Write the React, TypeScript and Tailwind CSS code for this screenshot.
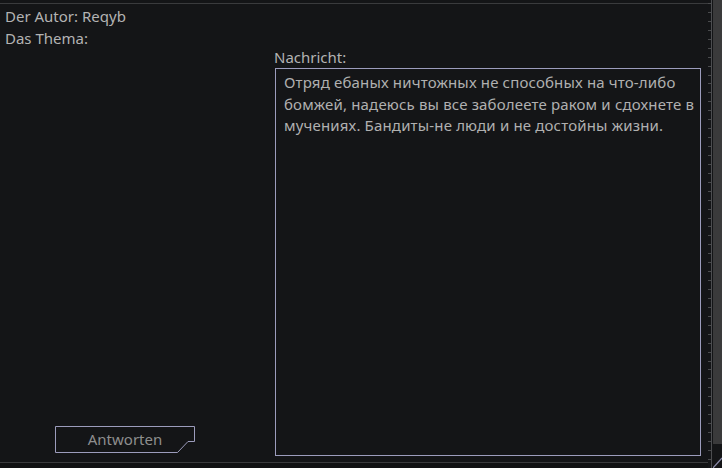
const ticks = Array.from({ length: 52 });

const CutButton = ({ label }: { label: string }) => (
    <button className="relative w-[140px] h-[27px] flex items-center justify-center text-[15px] text-[#8e8e8e]">
        <svg
            className="absolute inset-0"
            width="140"
            height="27"
            viewBox="0 0 140 27"
        >
            <path
                d="M0.5 0.5 H139.5 V15.5 H133 L122.5 26.5 H0.5 Z"
                fill="none"
                stroke="#9c9cbc"
                strokeWidth="1"
            />
        </svg>
        <span className="relative">{label}</span>
    </button>
);

export default function App() {
    return (
        <div
            className="w-[722px] h-[468px] bg-[#141517] flex overflow-hidden text-[#b3b3b3]"
            style={{ fontFamily: '"Noto Sans", "Liberation Sans", sans-serif' }}
        >
            <div className="w-[708px] flex flex-col pt-[3px]">
                <div className="flex-1 border-t border-b border-[#3a3b3d] flex">
                    {/* left column */}
                    <div className="w-[274px] flex flex-col pl-[5px] pt-[2px] pb-[9px]">
                        <p className="text-[15px] leading-[21px]">Der Autor: Reqyb</p>
                        <p className="text-[15px] leading-[21px] mt-[1px]">Das Thema:</p>
                        <div className="mt-auto pl-[50px]">
                            <CutButton label="Antworten" />
                        </div>
                    </div>
                    {/* right column */}
                    <div className="flex-1 flex flex-col pt-[43px] pb-[6px]">
                        <p className="text-[15px] leading-[20px] mb-[1px]">Nachricht:</p>
                        <div className="ml-[1px] w-[426px] flex-1 border border-[#9c9cbc] pl-[8px] pt-[3px] overflow-hidden">
                            <p className="text-[15px] leading-[21.5px] tracking-[0.16px] text-[#b0b0b0] whitespace-nowrap">
                                Отряд ебаных ничтожных не способных на что-либо
                                <br />
                                бомжей, надеюсь вы все заболеете раком и сдохнете в
                                <br />
                                мучениях. Бандиты-не люди и не достойны жизни.
                            </p>
                        </div>
                    </div>
                </div>
                <div className="h-[5px] bg-[#111213]" />
            </div>
            {/* ruler + scrollbar */}
            <div className="w-[14px] flex">
                <div className="w-[4px] flex flex-col pt-[3px]">
                    {ticks.map((_, i) => (
                        <div key={i} className="h-[9px] flex items-start justify-end">
                            <div className="w-[3px] h-[1px] bg-[#4a4b4d]" />
                        </div>
                    ))}
                </div>
                <div className="w-[1px] bg-[#4c4d50]" />
                <div className="flex-1 flex flex-col">
                    <div className="flex-1 bg-[#3a3a3b] ml-[1px] mb-[12px]" />
                    <svg width="9" height="12" viewBox="0 0 9 12" className="ml-[1px]">
                        <path d="M0 12 L9 2" stroke="#8a8aa8" strokeWidth="1.2" />
                    </svg>
                </div>
            </div>
        </div>
    );
}
